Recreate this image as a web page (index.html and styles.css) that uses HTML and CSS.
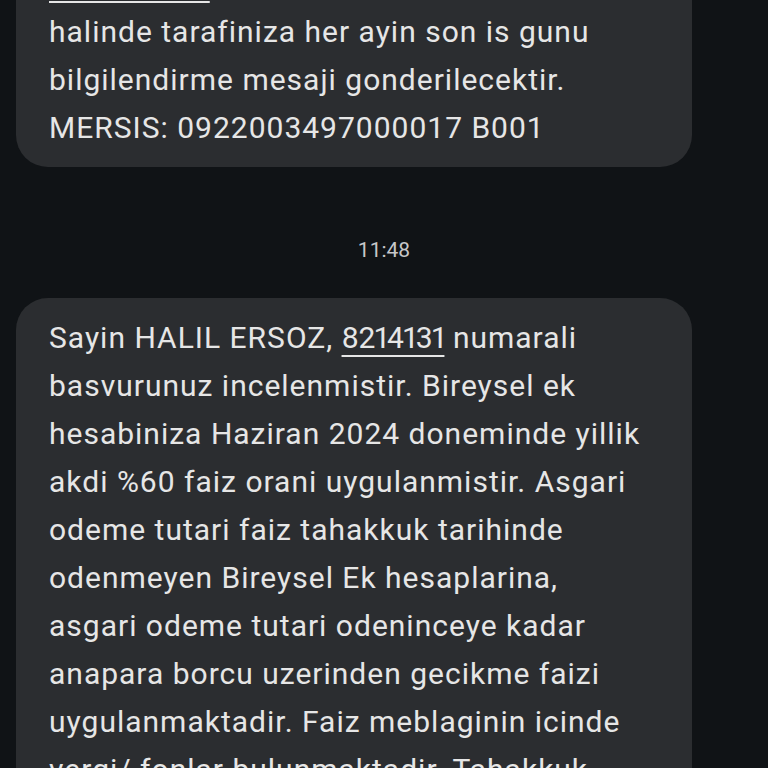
FILE: index.html
```html
<!DOCTYPE html>
<html lang="tr">
<head>
<meta charset="utf-8">
<link rel="stylesheet" href="styles.css">
</head>
<body>
<main class="thread">
  <div class="bubble bubble-first">
    <span class="line">Detayli bilgi icin</span>
    <span class="line"><span class="link">084440333</span> numarali</span>
    <span class="line">halinde tarafiniza her ayin son is gunu</span>
    <span class="line">bilgilendirme mesaji gonderilecektir.</span>
    <span class="line">MERSIS: 0922003497000017 B001</span>
  </div>
  <div class="time">11:48</div>
  <div class="bubble">
    <span class="line">Sayin HALIL ERSOZ, <span class="link link-narrow">8214131</span> numarali</span>
    <span class="line">basvurunuz incelenmistir. Bireysel ek</span>
    <span class="line">hesabiniza Haziran 2024 doneminde yillik</span>
    <span class="line">akdi %60 faiz orani uygulanmistir. Asgari</span>
    <span class="line">odeme tutari faiz tahakkuk tarihinde</span>
    <span class="line">odenmeyen Bireysel Ek hesaplarina,</span>
    <span class="line">asgari odeme tutari odeninceye kadar</span>
    <span class="line">anapara borcu uzerinden gecikme faizi</span>
    <span class="line">uygulanmaktadir. Faiz meblaginin icinde</span>
    <span class="line">vergi/ fonlar bulunmaktadir. Tahakkuk</span>
    <span class="line">tarihinde hesabiniza yansitilacaktir.</span>
  </div>
</main>
</body>
</html>
```

FILE: styles.css
```css
html, body {
  margin: 0;
  padding: 0;
  background: #101316;
}
body {
  width: 768px;
  height: 768px;
  overflow: hidden;
  font-family: Roboto, "Noto Sans", sans-serif;
  color: #e6e6e6;
}
.thread {
  display: flex;
  flex-direction: column;
}
.bubble {
  margin-left: 16px;
  width: 676px;
  box-sizing: border-box;
  background: #2b2d30;
  border-radius: 32px;
  padding: 16px 20px 15px 33px;
  font-size: 30px;
  line-height: 48px;
  letter-spacing: 1px;
}
.bubble-first {
  margin-top: -104px;
}
.line {
  display: block;
  white-space: nowrap;
}
.link {
  text-decoration: underline;
  text-decoration-thickness: 2px;
  text-underline-offset: 7px;
}
.link-narrow {
  font-variant-numeric: proportional-nums;
  letter-spacing: -0.6px;
}
.time {
  padding: 71px 0 36px;
  text-align: center;
  font-size: 21px;
  line-height: 24px;
  color: #c6c7c9;
}
```
